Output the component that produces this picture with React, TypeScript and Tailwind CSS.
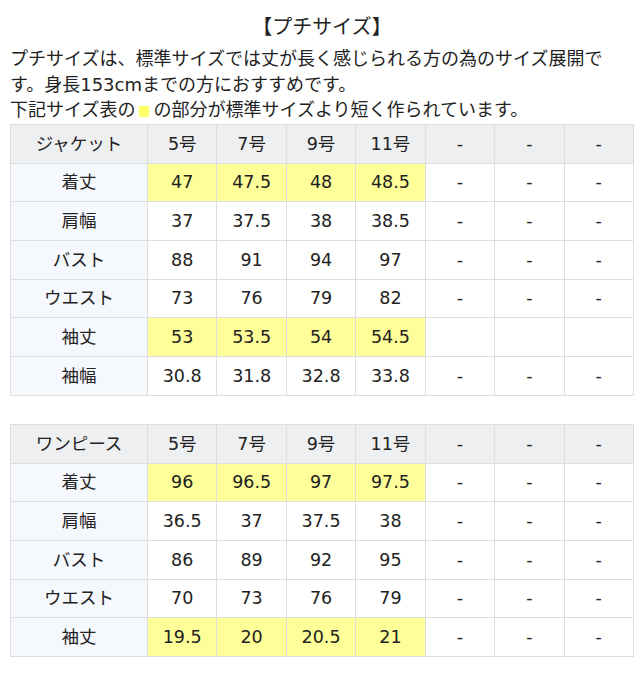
import React from "react";

type Row = { label: string; values: string[]; hl?: boolean };

const FONT = { fontFamily: '"DejaVu Sans","Noto Sans CJK JP",sans-serif' };

function SizeTable({ title, rows }: { title: string; rows: Row[] }) {
  const head = ["5号", "7号", "9号", "11号", "-", "-", "-"];
  return (
    <table className="w-[624px] table-fixed border-collapse text-[17.5px] text-[#222]">
      <colgroup>
        <col className="w-[137px]" />
        {head.map((_, i) => (
          <col key={i} />
        ))}
      </colgroup>
      <tbody>
        <tr className="h-[38.7px]">
          <td className="border border-[#dedede] bg-[#eeeff1] p-0 text-center">{title}</td>
          {head.map((h, i) => (
            <td key={i} className="border border-[#dedede] bg-[#eeeff1] p-0 text-center">
              {h}
            </td>
          ))}
        </tr>
        {rows.map((r, ri) => (
          <tr key={ri} className="h-[38.7px]">
            <td className="border border-[#dedede] bg-[#f5f8fc] p-0 text-center">{r.label}</td>
            {r.values.map((v, i) => (
              <td
                key={i}
                className={
                  r.hl && i < 4
                    ? "border border-[#dedede] bg-[#ffff99] p-0 text-center"
                    : "border border-[#dedede] bg-white p-0 text-center"
                }
              >
                {v}
              </td>
            ))}
          </tr>
        ))}
      </tbody>
    </table>
  );
}

export default function App() {
  const jacket: Row[] = [
    { label: "着丈", values: ["47", "47.5", "48", "48.5", "-", "-", "-"], hl: true },
    { label: "肩幅", values: ["37", "37.5", "38", "38.5", "-", "-", "-"] },
    { label: "バスト", values: ["88", "91", "94", "97", "-", "-", "-"] },
    { label: "ウエスト", values: ["73", "76", "79", "82", "-", "-", "-"] },
    { label: "袖丈", values: ["53", "53.5", "54", "54.5", "", "", ""], hl: true },
    { label: "袖幅", values: ["30.8", "31.8", "32.8", "33.8", "-", "-", "-"] },
  ];
  const onepiece: Row[] = [
    { label: "着丈", values: ["96", "96.5", "97", "97.5", "-", "-", "-"], hl: true },
    { label: "肩幅", values: ["36.5", "37", "37.5", "38", "-", "-", "-"] },
    { label: "バスト", values: ["86", "89", "92", "95", "-", "-", "-"] },
    { label: "ウエスト", values: ["70", "73", "76", "79", "-", "-", "-"] },
    { label: "袖丈", values: ["19.5", "20", "20.5", "21", "-", "-", "-"], hl: true },
  ];
  return (
    <div className="w-[640px] bg-white pl-[10px] pt-[12px] text-[#222]" style={FONT}>
      <div className="w-[624px] text-center text-[20px] leading-[31px]">【プチサイズ】</div>
      <div className="mt-[3px] text-[18px] leading-[25.5px]">
        プチサイズは、標準サイズでは丈が長く感じられる方の為のサイズ展開で
        <br />
        す。身長153cmまでの方におすすめです。
        <br />
        下記サイズ表の
        <span className="mx-[4px] inline-block h-[11px] w-[10px] bg-[#ffff66] align-[-1px]" />
        の部分が標準サイズより短く作られています。
      </div>
      <div className="mt-[1.5px]">
        <SizeTable title="ジャケット" rows={jacket} />
      </div>
      <div className="mt-[28px] pb-[20px]">
        <SizeTable title="ワンピース" rows={onepiece} />
      </div>
    </div>
  );
}
